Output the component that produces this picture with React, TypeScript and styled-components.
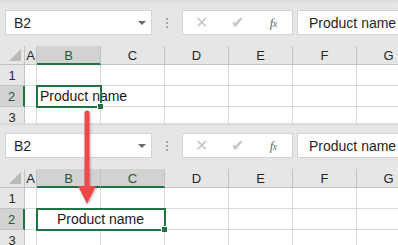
import styled, { createGlobalStyle } from 'styled-components';

const GlobalStyle = createGlobalStyle`
	html, body {
		margin: 0;
		padding: 0;
		background: #ffffff;
	}
`;

const Page = styled.div`
	position: relative;
	width: 398px;
	height: 245px;
	overflow: hidden;
	font-family: 'Liberation Sans', Arial, sans-serif;
`;

const Panel = styled.section<{ $height: number }>`
	display: flex;
	flex-direction: column;
	height: ${(p) => p.$height}px;
	overflow: hidden;
`;

const FormulaBar = styled.div`
	display: flex;
	align-items: center;
	height: 46px;
	padding: 10px 0 11px 5px;
	box-sizing: border-box;
	background: linear-gradient(#d9d9d9 0px, #e6e6e6 4px, #e6e6e6 100%);
	flex-shrink: 0;
`;

const NameBox = styled.div`
	display: flex;
	align-items: center;
	justify-content: space-between;
	width: 147px;
	height: 25px;
	box-sizing: border-box;
	padding: 0 5px 0 8px;
	background: #ffffff;
	border: 1px solid #d4d4d4;
	font-size: 14px;
	color: #262626;
`;

const DropArrow = styled.span`
	width: 0;
	height: 0;
	border-left: 4px solid transparent;
	border-right: 4px solid transparent;
	border-top: 4px solid #6a6a6a;
	margin-top: 1px;
`;

const Grip = styled.div`
	display: flex;
	flex-direction: column;
	gap: 2px;
	width: 30px;
	align-items: center;
	& > span {
		width: 2px;
		height: 2px;
		background: #a6a6a6;
	}
`;

const ActionBox = styled.div`
	display: flex;
	align-items: center;
	width: 111px;
	height: 25px;
	box-sizing: border-box;
	background: #ffffff;
	border: 1px solid #d4d4d4;
`;

const ActionIcon = styled.span<{ $w: number }>`
	display: flex;
	justify-content: center;
	align-items: center;
	width: ${(p) => p.$w}px;
	color: #c6c6c6;
	font-size: 16px;
`;

const FxLabel = styled.span`
	font-family: 'Liberation Serif', 'Times New Roman', serif;
	font-style: italic;
	font-size: 13px;
	color: #6a6a6a;
	letter-spacing: -0.5px;
	& > small {
		font-size: 10px;
	}
`;

const FormulaInput = styled.div`
	flex: 1;
	height: 25px;
	margin-left: 4px;
	box-sizing: border-box;
	padding-left: 11px;
	display: flex;
	align-items: center;
	background: #ffffff;
	border: 1px solid #d4d4d4;
	border-right: none;
	font-size: 14px;
	color: #262626;
	white-space: nowrap;
`;

const Row = styled.div<{ $h: number }>`
	display: flex;
	height: ${(p) => p.$h}px;
	flex-shrink: 0;
`;

const HeadCell = styled.div<{ $w: number; $active?: boolean }>`
	width: ${(p) => p.$w}px;
	flex-shrink: 0;
	box-sizing: border-box;
	display: flex;
	align-items: center;
	justify-content: center;
	background: ${(p) => (p.$active ? '#d2d2d2' : '#e6e6e6')};
	border-right: 1px solid #c3c3c3;
	border-bottom: ${(p) => (p.$active ? '2px solid #217346' : '1px solid #c3c3c3')};
	font-size: 13px;
	color: ${(p) => (p.$active ? '#1e5c3b' : '#262626')};
	padding-top: 1px;
`;

const Corner = styled.div`
	position: relative;
	width: 25px;
	flex-shrink: 0;
	box-sizing: border-box;
	background: #e6e6e6;
	border-right: 1px solid #c3c3c3;
	border-bottom: 1px solid #c3c3c3;
	&::after {
		content: '';
		position: absolute;
		right: 3px;
		bottom: 3px;
		width: 0;
		height: 0;
		border-left: 12px solid transparent;
		border-bottom: 12px solid #b9b9b9;
	}
`;

const RowHead = styled.div<{ $active?: boolean }>`
	width: 25px;
	flex-shrink: 0;
	box-sizing: border-box;
	display: flex;
	align-items: center;
	justify-content: center;
	background: ${(p) => (p.$active ? '#d2d2d2' : '#e6e6e6')};
	border-right: ${(p) => (p.$active ? '2px solid #217346' : '1px solid #c3c3c3')};
	border-bottom: 1px solid #c3c3c3;
	font-size: 13px;
	color: ${(p) => (p.$active ? '#1e5c3b' : '#262626')};
`;

const Cell = styled.div<{ $w: number; $align?: 'left' | 'center'; $selected?: boolean }>`
	position: relative;
	width: ${(p) => p.$w}px;
	flex-shrink: 0;
	box-sizing: border-box;
	display: flex;
	align-items: center;
	justify-content: ${(p) => (p.$align === 'center' ? 'center' : 'flex-start')};
	padding-left: ${(p) => (p.$align === 'center' ? 0 : 3)}px;
	background: #ffffff;
	border-right: 1px solid #d9d9d9;
	border-bottom: 1px solid #d9d9d9;
	font-size: 14px;
	color: #1a1a1a;
	white-space: nowrap;
	overflow: visible;
	z-index: ${(p) => (p.$selected ? 2 : 0)};
	${(p) =>
		p.$selected &&
		`
		outline: 2px solid #217346;
		outline-offset: -1px;
		&::after {
			content: '';
			position: absolute;
			right: -4px;
			bottom: -4px;
			width: 5px;
			height: 5px;
			background: #217346;
			border: 1px solid #ffffff;
		}
	`}
`;

const Arrow = styled.svg`
	position: absolute;
	left: 76px;
	top: 108px;
	z-index: 5;
	filter: drop-shadow(1px 1px 1px rgba(0, 0, 0, 0.25));
`;

const COLS = ['A', 'B', 'C', 'D', 'E', 'F', 'G'];
const WIDTHS = [12, 64, 64, 64, 64, 64, 64];

const Toolbar = () => (
	<FormulaBar>
		<NameBox>
			B2
			<DropArrow />
		</NameBox>
		<Grip>
			<span />
			<span />
			<span />
		</Grip>
		<ActionBox>
			<ActionIcon $w={38}>✕</ActionIcon>
			<ActionIcon $w={34}>✔</ActionIcon>
			<ActionIcon $w={38}>
				<FxLabel>
					f<small>x</small>
				</FxLabel>
			</ActionIcon>
		</ActionBox>
		<FormulaInput>Product name</FormulaInput>
	</FormulaBar>
);

const HeaderRow = ({ active }: { active: string[] }) => (
	<Row $h={19}>
		<Corner />
		{COLS.map((c, i) => (
			<HeadCell key={c} $w={WIDTHS[i]} $active={active.includes(c)}>
				{c}
			</HeadCell>
		))}
	</Row>
);

const PlainRow = ({ n }: { n: number }) => (
	<Row $h={21}>
		<RowHead>{n}</RowHead>
		{COLS.map((c, i) => (
			<Cell key={c} $w={WIDTHS[i]} />
		))}
	</Row>
);

const App = () => {
	return (
		<Page>
			<GlobalStyle />
			<Panel $height={123}>
				<Toolbar />
				<HeaderRow active={['B']} />
				<PlainRow n={1} />
				<Row $h={21}>
					<RowHead $active>2</RowHead>
					<Cell $w={12} />
					<Cell $w={64} $selected>
						Product name
					</Cell>
					{WIDTHS.slice(2).map((w, i) => (
						<Cell key={i} $w={w} />
					))}
				</Row>
				<PlainRow n={3} />
			</Panel>
			<Panel $height={122}>
				<Toolbar />
				<HeaderRow active={['B', 'C']} />
				<PlainRow n={1} />
				<Row $h={21}>
					<RowHead $active>2</RowHead>
					<Cell $w={12} />
					<Cell $w={128} $align="center" $selected>
						Product name
					</Cell>
					{WIDTHS.slice(3).map((w, i) => (
						<Cell key={i} $w={w} />
					))}
				</Row>
				<PlainRow n={3} />
			</Panel>
			<Arrow width="22" height="100" viewBox="0 0 22 100">
				<line x1="11" y1="5" x2="11" y2="80" stroke="#f0474a" strokeWidth="5" strokeLinecap="round" />
				<polygon points="2,78 20,78 11,96" fill="#f0474a" />
			</Arrow>
		</Page>
	);
};

export default App;
